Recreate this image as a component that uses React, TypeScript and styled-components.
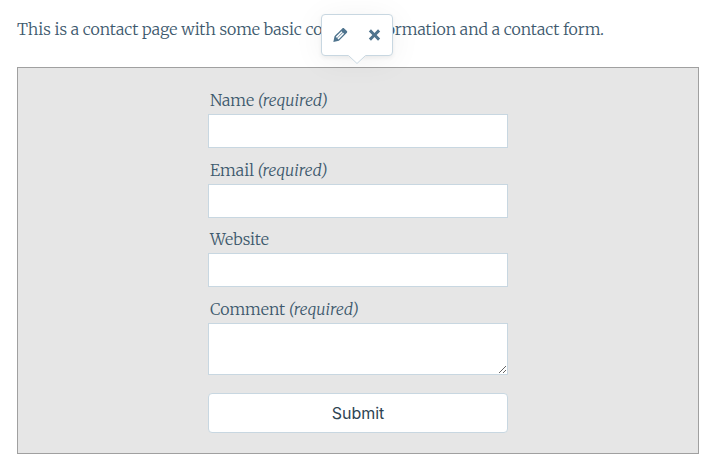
import React from 'react';
import styled, { createGlobalStyle } from 'styled-components';

const GlobalStyle = createGlobalStyle`
  *, *::before, *::after { box-sizing: border-box; }
  body { margin: 0; background: #fff; overflow: hidden; }
`;

const Page = styled.main`
  position: relative;
  width: 719px;
  height: 472px;
  padding: 17px 20px 0 17px;
  color: #3d596d;
  font-family: Merriweather, 'Liberation Serif', serif;
  font-size: 16px;
  font-weight: 300;
  line-height: 24px;
`;

const Intro = styled.p`
  margin: 0 0 26px;
  white-space: nowrap;
  letter-spacing: -0.055px;
`;

const FormPanel = styled.section`
  display: flex;
  justify-content: center;
  height: 387px;
  padding-top: 20px;
  background: #e6e6e6;
  border: 1px solid #a0a0a0;
`;

const Form = styled.form`
  display: flex;
  flex-direction: column;
  width: 300px;
`;

const Field = styled.label<{ $height: number }>`
  display: flex;
  flex-direction: column;
  height: ${({ $height }) => $height}px;
`;

const LabelText = styled.span`
  height: 26px;
  padding-left: 2px;
`;

const Required = styled.em`
  font-style: italic;
  margin-left: -0.5px;
`;

const TextInput = styled.input`
  width: 100%;
  height: 34px;
  padding: 6px 10px;
  background: #fff;
  border: 1px solid #c8d7e1;
  border-radius: 0;
  outline: 0;
`;

const CommentInput = styled.textarea`
  width: 100%;
  height: 52px;
  padding: 6px 10px;
  background: #fff;
  border: 1px solid #c8d7e1;
  border-radius: 0;
  outline: 0;
  resize: vertical;
`;

const SubmitButton = styled.button`
  height: 40px;
  padding: 0;
  color: #2e4453;
  background: #fff;
  border: 1px solid #c8d7e1;
  border-radius: 4px;
  font: 400 16px/22px Inter, sans-serif;
`;

const Toolbar = styled.div`
  position: absolute;
  top: 14px;
  left: 321px;
  display: flex;
  width: 72px;
  height: 42px;
  background: #fff;
  border: 1px solid #c8d7e1;
  border-radius: 4px;
  box-shadow: 0 2px 4px rgba(0, 0, 0, 0.06), 0 4px 32px rgba(0, 0, 0, 0.06);
`;

const ToolButton = styled.button`
  display: flex;
  align-items: center;
  justify-content: center;
  width: 34px;
  height: 40px;
  padding: 0;
  color: #4f748e;
  background: none;
  border: 0;
  &:first-child { margin-left: 1px; }
`;

const Pointer = styled.svg`
  position: absolute;
  top: 40px;
  left: 26px;
`;

const fields = [
  { id: 'name', label: 'Name', required: true, height: 70 },
  { id: 'email', label: 'Email', required: true, height: 69 },
  { id: 'website', label: 'Website', required: false, height: 70 },
];

export default function App() {
  return (
    <>
      <GlobalStyle />
      <Page>
        <Intro>This is a contact page with some basic contact information and a contact form.</Intro>
        <FormPanel>
          <Form onSubmit={(event) => event.preventDefault()}>
            {fields.map((field) => (
              <Field key={field.id} $height={field.height}>
                <LabelText>
                  {field.label} {field.required && <Required>(required)</Required>}
                </LabelText>
                <TextInput name={field.id} />
              </Field>
            ))}
            <Field $height={96}>
              <LabelText>
                Comment <Required>(required)</Required>
              </LabelText>
              <CommentInput name="comment" />
            </Field>
            <SubmitButton type="submit">Submit</SubmitButton>
          </Form>
        </FormPanel>
        <Toolbar>
          <ToolButton type="button" aria-label="Edit">
            <svg width="20" height="20" viewBox="-0.3 0 20 20" fill="currentColor">
              <path d="M13.89 3.39l2.71 2.72c.46.46.42 1.24.03 1.64l-8.01 8.02-5.56 1.16 1.16-5.58s7.6-7.63 7.99-8.03c.39-.39 1.22-.39 1.68.07zm-2.73 2.79l-5.59 5.61 1.11 1.11 5.54-5.65zm-2.97 8.23l5.58-5.6-1.07-1.08-5.59 5.6z" />
            </svg>
          </ToolButton>
          <ToolButton type="button" aria-label="Remove">
            <svg width="20" height="20" viewBox="-0.5 0 20 20" fill="currentColor">
              <path d="M12.12 10l3.53 3.53-2.12 2.12L10 12.12l-3.54 3.54-2.12-2.12L7.88 10 4.34 6.46l2.12-2.12L10 7.88l3.54-3.53 2.12 2.12z" />
            </svg>
          </ToolButton>
          <Pointer width="18" height="10" viewBox="0 0 18 10">
            <path d="M0 0H18L9 9Z" fill="#fff" />
            <path d="M.5 .5L9 8.5L17.5 .5" fill="none" stroke="#c8d7e1" />
          </Pointer>
        </Toolbar>
      </Page>
    </>
  );
}
